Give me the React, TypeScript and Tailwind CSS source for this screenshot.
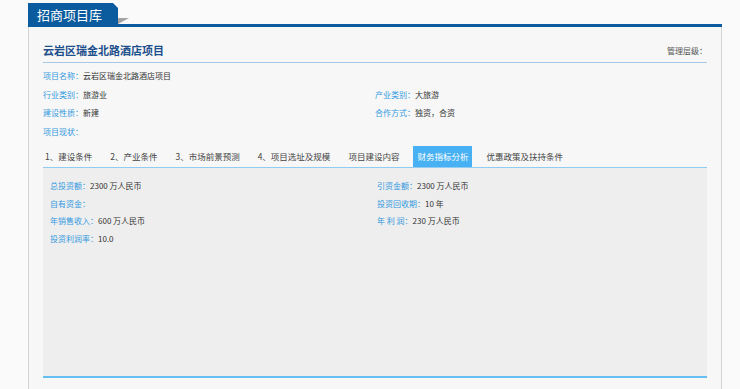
const font = "font-['Noto_Sans_CJK_SC','Noto_Sans',sans-serif]";

const infoRows: [string, string, string?, string?][] = [
  ["项目名称：", "云岩区瑞金北路酒店项目"],
  ["行业类别：", "旅游业", "产业类别：", "大旅游"],
  ["建设性质：", "新建", "合作方式：", "独资，合资"],
  ["项目现状：", ""],
];

const tabs = [
  "1、建设条件",
  "2、产业条件",
  "3、市场前景预测",
  "4、项目选址及规模",
  "项目建设内容",
  "财务指标分析",
  "优惠政策及扶持条件",
];

const finance = {
  left: [
    ["总投资额：", "2300 万人民币"],
    ["自有资金：", ""],
    ["年销售收入：", "600 万人民币"],
    ["投资利润率：", "10.0"],
  ],
  right: [
    ["引资金额：", "2300 万人民币"],
    ["投资回收期：", "10 年"],
    ["年 利 润：", "230 万人民币"],
  ],
};

const Field = ({ label, value, tall }: { label: string; value: string; tall?: boolean }) => (
  <div className={tall ? "h-[18.5px] leading-[18.5px] whitespace-pre" : "h-[17.5px] leading-[17.5px] whitespace-pre"}>
    <span className="text-[#3399e0]">{label}</span>
    <span className="text-[#333]">{value}</span>
  </div>
);

const Header = () => (
  <div className="flex h-[24px]">
    <div className="w-[90px] h-full bg-[#0b5c9e] text-white text-[13px] leading-[21px] pl-[9px] pt-[1px] [clip-path:polygon(0_0,calc(100%_-_5px)_0,100%_5px,100%_100%,0_100%)]">
      招商项目库
    </div>
    <div className="flex-1 flex items-end border-b-[3px] border-[#0b5c9e]">
      <svg width="11" height="6" viewBox="0 0 11 6" className="block">
        <polygon points="0,0 11,0 0,6" fill="#a3a3a3" />
      </svg>
    </div>
  </div>
);

export default function App() {
  return (
    <div className={`${font} min-h-[389px] bg-[#fafafa] pt-[3px] pl-[28px] pr-[18px]`}>
      <Header />
      <div className="border-x border-[#d3d3d3] bg-[#f7f7f7] px-[14px] pb-[20px]">
        {/* 标题 */}
        <div className="flex justify-between items-end pt-[16px] pb-[5px] border-b border-[#a9c7e8]">
          <h1 className="text-[11px] leading-[14px] font-bold text-[#1d4f8c]">云岩区瑞金北路酒店项目</h1>
          <span className="text-[8px] leading-[12px] text-[#555]">管理层级：</span>
        </div>

        {/* 基本信息 */}
        <div className="grid grid-cols-[332px_1fr] text-[8px] pt-[4px]">
          {infoRows.map(([l1, v1, l2, v2], i) => (
            <div key={i} className="contents">
              <Field label={l1} value={v1} tall />
              {l2 ? <Field label={l2} value={v2 || ""} tall /> : <div />}
            </div>
          ))}
        </div>

        {/* 选项卡 */}
        <div className="flex gap-[10px] mt-[5px] -ml-[2px] h-[21px]">
          {tabs.map((t) => (
            <div
              key={t}
              className={
                t === "财务指标分析"
                  ? "px-[4px] bg-[#47b1f3] text-white text-[8.5px] leading-[21px]"
                  : "px-[4px] text-[#444] text-[8.5px] leading-[21px]"
              }
            >
              {t}
            </div>
          ))}
        </div>

        {/* 财务指标 */}
        <div className="min-h-[211px] bg-[#eeeeee] border-t border-[#93ccf2] border-b-2 border-b-[#66bff3] pl-[7px] pt-[9px] text-[8px]">
          <div className="grid grid-cols-[327px_1fr]">
            <div>
              {finance.left.map(([l, v]) => (
                <Field key={l} label={l} value={v} />
              ))}
            </div>
            <div>
              {finance.right.map(([l, v]) => (
                <Field key={l} label={l} value={v} />
              ))}
            </div>
          </div>
        </div>
      </div>
    </div>
  );
}
